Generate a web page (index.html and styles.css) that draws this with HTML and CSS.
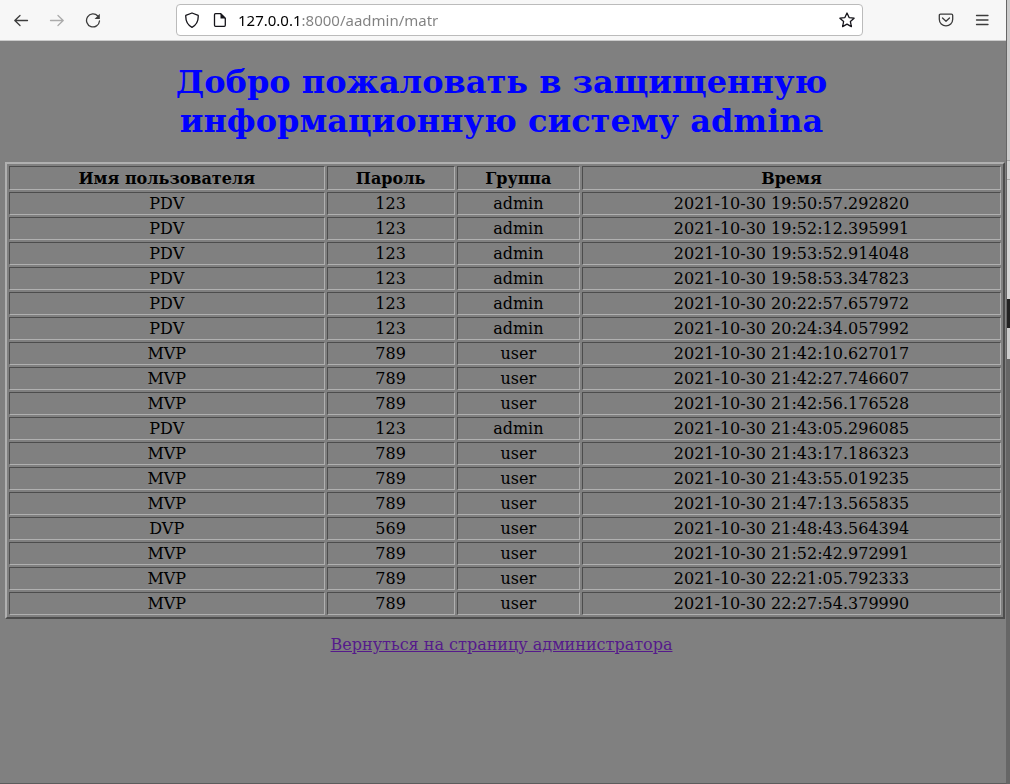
FILE: index.html
```html
<!DOCTYPE html>
<html lang="ru">
<head>
    <meta charset="utf-8">
    <title>aadmin/matr</title>
    <link rel="stylesheet" href="styles.css">
</head>
<body>
<div class="window">
    <header class="toolbar">
        <nav class="nav">
            <button type="button" class="tool" aria-label="Назад">
                <svg width="16" height="16" viewBox="0 0 16 16"><path d="M14.500 8.500H2M7 3.500L1.800 8.500 7 13.500"/></svg>
            </button>
            <button type="button" class="tool off" aria-label="Вперёд" disabled>
                <svg width="16" height="16" viewBox="0 0 16 16"><path d="M1.500 8.500H14M9 3.500l5.200 5L9 13.500"/></svg>
            </button>
            <button type="button" class="tool" aria-label="Обновить">
                <svg width="16" height="16" viewBox="0 0 16 16"><path d="M12.800 4A6.500 6.500 0 1 0 14.500 9"/><path class="solid" d="M14.800 1.800v5.200H9.600z"/></svg>
            </button>
        </nav>
        <div class="address">
            <svg class="dark" width="16" height="16" viewBox="0 0 16 16"><path d="M8 1L14.200 3.400c.3 5-1.200 9.400-6.200 11.900C3 12.800 1.500 8.400 1.800 3.400z"/></svg>
            <svg class="dark" width="16" height="16" viewBox="0 0 16 16"><path d="M3.500 1.700h5.300l4.500 4.500v7.100q0 1-1 1H3.500q-1 0-1-1V2.700q0-1 1-1z"/><path class="solid" d="M8.500 1.500v5h5z"/></svg>
            <input class="url" type="text" aria-label="Адрес" value="127.0.0.1:8000/aadmin/matr">
            <button type="button" class="tool star" aria-label="В закладки">
                <svg class="dark" width="16" height="16" viewBox="0 0 16 16"><path d="M8 1l2.100 4.600 5 .6-3.700 3.400 1 5L8 12.100l-4.400 2.500 1-5L.9 6.200l5-.6z"/></svg>
            </button>
        </div>
        <div class="extra">
            <button type="button" class="tool" aria-label="Pocket">
                <svg width="16" height="16" viewBox="0 0 16 16"><path d="M2.500 2.200h11q1.200 0 1.200 1.200v3.800a6.700 6.700 0 0 1-13.400 0V3.400q0-1.200 1.200-1.200zM4.500 6L8 9.200 11.500 6"/></svg>
            </button>
            <button type="button" class="tool" aria-label="Меню">
                <svg width="16" height="16" viewBox="0 0 16 16"><path d="M2.500 3.500h11.500M2.500 8h11.500M2.500 12.500h11.500"/></svg>
            </button>
        </div>
    </header>
    <main class="page">
        <h1>Добро пожаловать в защищенную информационную систему admina</h1>
        <div class="table_wrap">
            <table class="users">
                <thead>
                    <tr><th class="name">Имя пользователя</th><th class="pass">Пароль</th><th class="group">Группа</th><th class="time">Время</th></tr>
                </thead>
                <tbody>
                    <tr><td>PDV</td><td>123</td><td>admin</td><td>2021-10-30 19:50:57.292820</td></tr>
                    <tr><td>PDV</td><td>123</td><td>admin</td><td>2021-10-30 19:52:12.395991</td></tr>
                    <tr><td>PDV</td><td>123</td><td>admin</td><td>2021-10-30 19:53:52.914048</td></tr>
                    <tr><td>PDV</td><td>123</td><td>admin</td><td>2021-10-30 19:58:53.347823</td></tr>
                    <tr><td>PDV</td><td>123</td><td>admin</td><td>2021-10-30 20:22:57.657972</td></tr>
                    <tr><td>PDV</td><td>123</td><td>admin</td><td>2021-10-30 20:24:34.057992</td></tr>
                    <tr><td>MVP</td><td>789</td><td>user</td><td>2021-10-30 21:42:10.627017</td></tr>
                    <tr><td>MVP</td><td>789</td><td>user</td><td>2021-10-30 21:42:27.746607</td></tr>
                    <tr><td>MVP</td><td>789</td><td>user</td><td>2021-10-30 21:42:56.176528</td></tr>
                    <tr><td>PDV</td><td>123</td><td>admin</td><td>2021-10-30 21:43:05.296085</td></tr>
                    <tr><td>MVP</td><td>789</td><td>user</td><td>2021-10-30 21:43:17.186323</td></tr>
                    <tr><td>MVP</td><td>789</td><td>user</td><td>2021-10-30 21:43:55.019235</td></tr>
                    <tr><td>MVP</td><td>789</td><td>user</td><td>2021-10-30 21:47:13.565835</td></tr>
                    <tr><td>DVP</td><td>569</td><td>user</td><td>2021-10-30 21:48:43.564394</td></tr>
                    <tr><td>MVP</td><td>789</td><td>user</td><td>2021-10-30 21:52:42.972991</td></tr>
                    <tr><td>MVP</td><td>789</td><td>user</td><td>2021-10-30 22:21:05.792333</td></tr>
                    <tr><td>MVP</td><td>789</td><td>user</td><td>2021-10-30 22:27:54.379990</td></tr>
                </tbody>
            </table>
        </div>
        <p class="back"><a href="#">Вернуться на страницу администратора</a></p>
    </main>
</div>
<div class="behind">
    <div class="behind_top"></div>
    <div class="behind_row"></div>
    <div class="behind_gap"></div>
    <div class="behind_dark"></div>
    <div class="behind_light"></div>
</div>
</body>
</html>
```
FILE: styles.css
```css
*{
    box-sizing: border-box;
}
body{
    display: flex;
    min-height: 100vh;
    margin: 0;
    background: #666;
    font-family: "DejaVu Serif", serif;
    font-size: 16px;
}
.window{
    flex: 1;
    display: flex;
    flex-direction: column;
    border-right: 1px solid #666;
    border-bottom: 1px solid #5c5c5c;
}
/* browser toolbar */
.toolbar{
    display: flex;
    align-items: center;
    justify-content: space-between;
    height: 41px;
    padding: 0 15px 0 12px;
    background: #f7f7f7;
    border-bottom: 1px solid #ccc;
}
.nav{
    display: flex;
    gap: 18px;
    width: 164px;
}
.extra{
    display: flex;
    justify-content: flex-end;
    gap: 18px;
    width: 128px;
}
.tool{
    display: flex;
    padding: 1px;
    border: 0;
    background: none;
}
.tool.off{
    opacity: 0.4;
}
.toolbar svg{
    flex: none;
    fill: none;
    stroke: #3c3c3c;
    stroke-width: 1.300;
    stroke-linecap: round;
    stroke-linejoin: round;
}
.toolbar svg.dark{
    stroke: #15141a;
    stroke-width: 1.300;
}
.toolbar svg .solid{
    fill: #3c3c3c;
    stroke: none;
}
.toolbar svg.dark .solid{
    fill: #15141a;
}
.address{
    flex: 1;
    display: flex;
    align-items: center;
    gap: 12px;
    height: 32px;
    padding: 0 6px 0 7px;
    background: #fff;
    border: 1px solid #bbb;
    border-radius: 4px;
}
.url{
    flex: 1;
    min-width: 0;
    height: 24px;
    padding: 0;
    margin-left: -2px;
    border: 0;
    outline: 0;
    font-family: "Noto Sans", sans-serif;
    font-size: 15px;
    color: #000;
    /* host is black, the rest of the address is grey */
    background: linear-gradient(to right, #000 64px, #808080 64px);
    -webkit-background-clip: text;
    background-clip: text;
    -webkit-text-fill-color: transparent;
}
/* page */
.page{
    flex: 1;
    background: #808080;
    text-align: center;
}
h1{
    margin: 0;
    padding: 22px 11px 21px 8px;
    color: #00f;
    font-size: 32px;
    line-height: 39px;
}
.table_wrap{
    padding: 0 1px 0 5px;
}
.users{
    width: 100%;
    table-layout: fixed;
    border-collapse: separate;
    border-spacing: 2px;
    border: 2px solid;
    border-color: #b0b0b0 #4d4d4d #4d4d4d #b0b0b0;
}
.users th,.users td{
    padding: 1px;
    border: 1px solid;
    border-color: #4d4d4d #b0b0b0 #b0b0b0 #4d4d4d;
    line-height: 19px;
}
.users th{
    padding-top: 2px;
}
.name{
    width: 32%;
}
.pass{
    width: 13%;
}
.group{
    width: 12.5%;
}
.time{
    width: 42.5%;
}
.back{
    margin: 16px 0;
    padding-right: 3px;
    line-height: 19px;
}
.back a{
    color: #551a8b;
}
/* edge of the window behind */
.behind{
    width: 3px;
}
.behind_top{
    height: 160px;
    background: #ccc;
}
.behind_row{
    height: 20px;
    background: #d6d6d6;
    border-top: 1px solid #aaa;
    border-bottom: 1px solid #aaa;
}
.behind_gap{
    height: 119px;
    background: #d6d6d6;
}
.behind_dark{
    height: 29px;
    background: #222;
}
.behind_light{
    height: 31px;
    background: #ccc;
}
```
